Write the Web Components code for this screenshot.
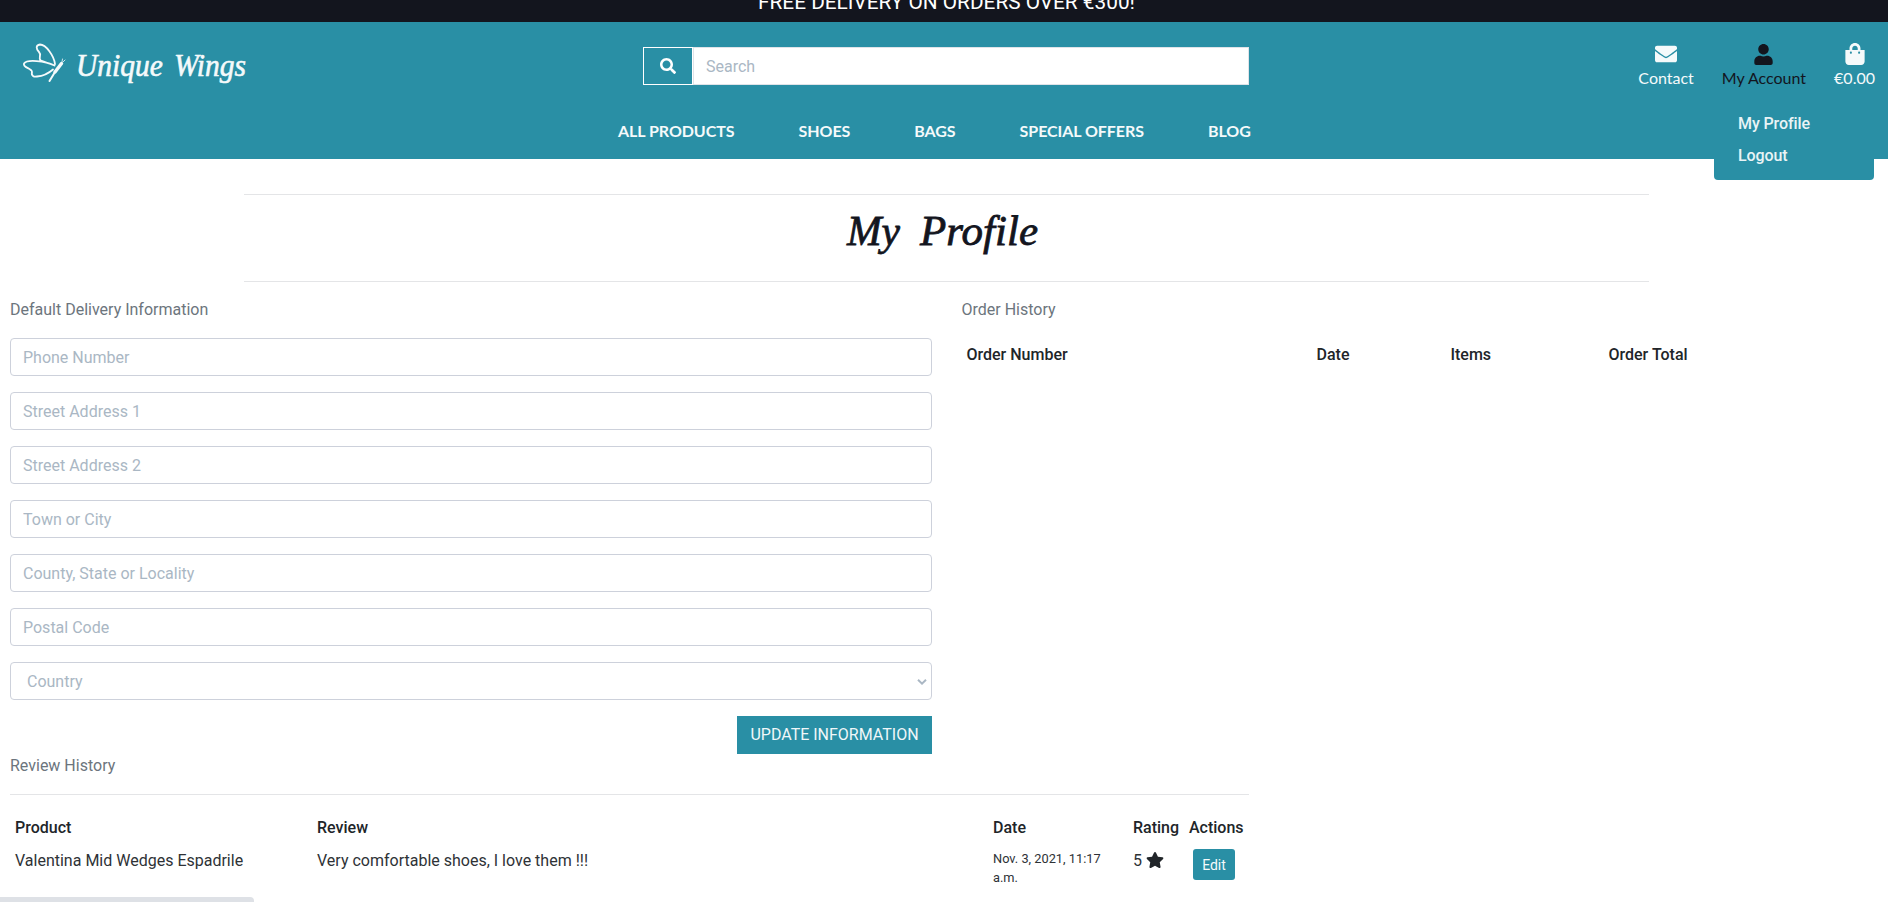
<!DOCTYPE html>
<html lang="en">
<head>
<meta charset="utf-8">
<title>Unique Wings - My Profile</title>
<style>
html{overflow:hidden;height:902px}
body{margin:0;height:902px;overflow:hidden;background:#fff;color:#212529;font:400 16px/24px Roboto,sans-serif;--teal:#298fa5;--ink:#13151e;--line:#e4e5e7;position:relative}
</style>
</head>
<body>
<shop-page></shop-page>
<script>
const make=(name,html)=>customElements.define(name,class extends HTMLElement{
  constructor(){super();this.attachShadow({mode:'open'}).innerHTML=html.replace(/\{(\w+)\}/g,(m,k)=>this.getAttribute(k)||'');}
});

make('promo-banner',`<style>
:host{display:flex;height:22px;overflow:hidden;background:var(--ink);color:#fff;justify-content:center;font-size:20.800px;line-height:24px}
span{margin-top:-10px;padding-left:5px;height:24px;white-space:nowrap}
</style><span><slot></slot></span>`);

make('brand-logo',`<style>:host{display:block;width:260px;height:60px}svg{display:block;overflow:visible}</style>
<svg width="260" height="60" viewBox="0 0 260 60" fill="none" stroke="#f5fafb" stroke-linecap="round" stroke-linejoin="round">
<path stroke-width="1.800" d="M55 21C54 13 46 1.500 40 1.500C35.500 2 36 6 39 9C42 12 38 15 40.500 17.500M54.500 22.500C45 18 27 16 24 20.500C22.500 25 32 25 32 29C31 33 34 34 37 33.500C44 33 49 30 53 26.500M54.500 22.500L41 17.500"/>
<path stroke-width="3.400" d="M61.500 20.500L55 29"/><path stroke-width="2" d="M55 29L49.500 38"/>
<path stroke-width=".8" d="M62 19L62.500 16M63 19L65 17"/>
<text x="76" y="32.500" fill="#f5fafb" stroke-width=".6" font-family="'Liberation Serif',serif" font-style="italic" font-size="32" word-spacing="4" textLength="170" lengthAdjust="spacingAndGlyphs">Unique Wings</text></svg>`);

make('search-box',`<style>
:host{display:flex;width:606px;height:38px}
button{box-sizing:border-box;width:50px;border:1px solid #fff;background:var(--teal);padding:0;display:grid;place-items:center}
input{box-sizing:border-box;flex:1;border:1px solid #dfe3e8;border-radius:0;padding:0 12px;font:16px Roboto;background:#fff}
input::placeholder{color:#aab7c4}
</style><button><svg width="16" height="16" viewBox="0 0 512 512" fill="#fff"><path d="M505 442.700L405.300 343c-4.500-4.500-10.600-7-17-7H372c27.600-35.300 44-79.700 44-128C416 93.100 322.900 0 208 0S0 93.100 0 208s93.100 208 208 208c48.300 0 92.700-16.400 128-44v16.300c0 6.400 2.500 12.500 7 17l99.700 99.700c9.400 9.400 24.600 9.400 33.900 0l28.300-28.300c9.400-9.400 9.400-24.600.1-34zM208 336c-70.700 0-128-57.200-128-128 0-70.700 57.200-128 128-128 70.700 0 128 57.200 128 128 0 70.700-57.200 128-128 128z"/></svg></button><input placeholder="Search">`);

make('tool-link',`<style>
:host{display:flex;flex-direction:column;align-items:center;color:#f5fafb;font:16px/24px Lato,sans-serif;white-space:nowrap}
:host([active]){color:var(--ink)}
.i{height:24px;display:grid;place-items:center}
::slotted(svg){display:block;fill:currentColor}
</style><div class="i"><slot name="icon"></slot></div><span><slot></slot></span>`);

make('account-menu',`<style>
:host{box-sizing:border-box;position:absolute;left:1714px;top:107px;width:160px;height:73px;background:var(--teal);border-radius:0 0 4px 4px;padding:1px 24px 0;color:#e9f4f6;font-weight:500;letter-spacing:-.1px;display:flex;flex-direction:column}
a{height:32px;line-height:32px}
</style><a>My Profile</a><a>Logout</a>`);

make('main-nav',`<style>
:host{display:flex;gap:64px;font:700 16px/24px Lato,sans-serif;letter-spacing:-.05px;color:#f5fafb;text-transform:uppercase;white-space:nowrap}
</style><slot></slot>`);

make('site-header',`<style>
:host{display:block;height:137px;background:var(--teal)}
.top{display:grid;grid-template-columns:643px 606px 1fr;height:97px}
brand-logo{margin-top:21px}
search-box{margin-top:25px}
.tools{display:flex;justify-content:flex-end;gap:28px;padding:20px 13px 0 0}
main-nav{margin-left:618px}
</style><div class="top"><brand-logo></brand-logo><search-box></search-box>
<div class="tools">
<tool-link><svg slot="icon" width="22" height="22" viewBox="0 0 512 512"><path d="M502.300 190.800c3.900-3.100 9.700-.2 9.700 4.700V400c0 26.500-21.500 48-48 48H48c-26.500 0-48-21.500-48-48V195.600c0-5 5.700-7.800 9.700-4.700 22.400 17.400 52.100 39.500 154.100 113.600 21.100 15.400 56.700 47.800 92.200 47.600 35.700.3 72-32.800 92.300-47.600 102-74.100 131.600-96.300 154-113.700zM256 320c23.200.4 56.600-29.200 73.400-41.400 132.700-96.300 142.800-104.700 173.400-128.700 5.800-4.500 9.200-11.500 9.200-18.900v-19c0-26.500-21.500-48-48-48H48c-26.500 0-48 21.500-48 48v19c0 7.400 3.400 14.300 9.200 18.900 30.600 23.900 40.700 32.400 173.400 128.700 16.800 12.200 50.200 41.800 73.400 41.400z"/></svg>Contact</tool-link>
<tool-link active><svg slot="icon" width="19" height="21" viewBox="0 0 448 512"><path d="M224 256c70.700 0 128-57.300 128-128S294.700 0 224 0 96 57.300 96 128s57.300 128 128 128zm89.600 32h-16.700c-22.200 10.200-46.900 16-72.900 16s-50.600-5.800-72.900-16h-16.700C60.200 288 0 348.200 0 422.400V464c0 26.500 21.500 48 48 48h352c26.500 0 48-21.500 48-48v-41.600c0-74.200-60.200-134.400-134.400-134.400z"/></svg>My Account</tool-link>
<tool-link><svg slot="icon" width="20" height="22" viewBox="0 0 448 512"><path d="M352 160v-32C352 57.400 294.600 0 224 0S96 57.400 96 128v32H0v272c0 44.200 35.800 80 80 80h288c44.200 0 80-35.800 80-80V160h-96zm-192-32c0-35.300 28.700-64 64-64s64 28.700 64 64v32H160v-32zm160 120c-13.300 0-24-10.700-24-24s10.700-24 24-24 24 10.700 24 24-10.700 24-24 24zm-192 0c-13.300 0-24-10.700-24-24s10.700-24 24-24 24 10.700 24 24-10.700 24-24 24z"/></svg>€0.00</tool-link>
</div></div>
<main-nav><a>All Products</a><a>Shoes</a><a>Bags</a><a>Special Offers</a><a>Blog</a></main-nav>
<account-menu></account-menu>`);

make('page-title',`<style>
:host{display:block;box-sizing:border-box;width:1405px;height:88px;margin:35px 0 0 244px;border-top:1px solid var(--line);border-bottom:1px solid var(--line)}
svg{display:block;margin-left:600px}
</style><svg width="210" height="80" viewBox="0 0 210 80"><g fill="#13151e" stroke="#13151e" stroke-width=".8" font-family="'Liberation Serif',serif" font-style="italic" font-size="43"><text x="3" y="50" textLength="53" lengthAdjust="spacingAndGlyphs">My</text><text x="76" y="50" textLength="118" lengthAdjust="spacing">Profile</text></g></svg>`);

make('form-field',`<style>
:host{display:block;height:38px}
input{display:block;box-sizing:border-box;width:100%;height:38px;border:1px solid #cdd1db;border-radius:4px;padding:0 12px;font:16px Roboto;background:#fff}
input::placeholder{color:#aab7c4;opacity:1}
</style><input placeholder="{label}">`);

make('select-field',`<style>
:host{box-sizing:border-box;display:flex;justify-content:space-between;align-items:center;height:38px;border:1px solid #cdd1db;border-radius:4px;padding:1px 4px 0 16px;color:#aab7c4}
</style><span><slot></slot></span><svg width="10" height="6" viewBox="0 0 10 6" fill="none" stroke="#aab7c4" stroke-width="2"><path d="M1 .8L5 4.600L9 .8"/></svg>`);

make('delivery-form',`<style>
:host{display:flex;flex-direction:column;gap:16px;width:922px}
p{margin:0;color:#6c757d;height:24px}
button{align-self:flex-end;width:195px;height:38px;border:0;border-radius:0;padding:0 0 1px;background:var(--teal);color:#f0f7f9;font:400 16px Roboto;text-transform:uppercase;white-space:nowrap}
</style><p>Default Delivery Information</p>
<form-field label="Phone Number"></form-field><form-field label="Street Address 1"></form-field><form-field label="Street Address 2"></form-field><form-field label="Town or City"></form-field><form-field label="County, State or Locality"></form-field><form-field label="Postal Code"></form-field>
<select-field>Country</select-field><button>Update Information</button>`);

make('order-history',`<style>
:host{display:block;width:916px;margin-left:-.5px}
p{margin:0;color:#6c757d}
div{display:grid;grid-template-columns:350px 134px 158px 1fr;padding-left:5px;margin-top:21px;font-weight:500}
</style><p>Order History</p><div><span>Order Number</span><span>Date</span><span>Items</span><span>Order Total</span></div>`);

make('review-history',`<style>
:host{display:block;width:1239px;margin:-1px 0 0 10px}
p{margin:0;color:#6c757d;height:41px;line-height:26px;border-bottom:1px solid var(--line)}
.r{display:grid;grid-template-columns:302px 676px 140px 56px 1fr;padding-left:5px;white-space:nowrap}
.h{font-weight:500;margin-top:21px}
.b{margin-top:9px;color:#2e3236}
small{font-size:12.800px;line-height:19px;white-space:normal;width:120px}
svg{vertical-align:-2px}
button{display:block;width:42px;height:31px;margin:0 0 0 4px;padding:0;border:0;border-radius:3px;background:var(--teal);color:#f5fafb;font:400 14px Roboto}
</style><p>Review History</p>
<div class="r h"><span>Product</span><span>Review</span><span>Date</span><span>Rating</span><span>Actions</span></div>
<div class="r b"><span>Valentina Mid Wedges Espadrile</span><span>Very comfortable shoes, I love them !!!</span><small>Nov. 3, 2021, 11:17 a.m.</small>
<span>5 <svg width="18" height="16" viewBox="0 0 576 512" fill="#212529"><path d="M259.300 17.800L194 150.200 47.900 171.500c-26.200 3.800-36.700 36.100-17.700 54.600l105.700 103-25 145.500c-4.500 26.300 23.200 46 46.400 33.700L288 439.600l130.700 68.700c23.200 12.200 50.900-7.400 46.400-33.700l-25-145.500 105.700-103c19-18.500 8.500-50.800-17.700-54.600L382 150.200 316.700 17.800c-11.700-23.600-45.600-23.900-57.400 0z"/></svg></span><span><button>Edit</button></span></div>`);

make('status-bubble',`<style>:host{position:absolute;left:0;top:897px;width:254px;height:5px;background:#dee1e6;border-top-right-radius:4px}</style>`);

make('shop-page',`<style>
:host{display:block}
.cols{display:grid;grid-template-columns:922px 916px;column-gap:30px;padding:16px 10px 0}
</style><promo-banner>FREE DELIVERY ON ORDERS OVER €300!</promo-banner><site-header></site-header><page-title></page-title>
<div class="cols"><delivery-form></delivery-form><order-history></order-history></div><review-history></review-history><status-bubble></status-bubble>`);
</script>
</body>
</html>
